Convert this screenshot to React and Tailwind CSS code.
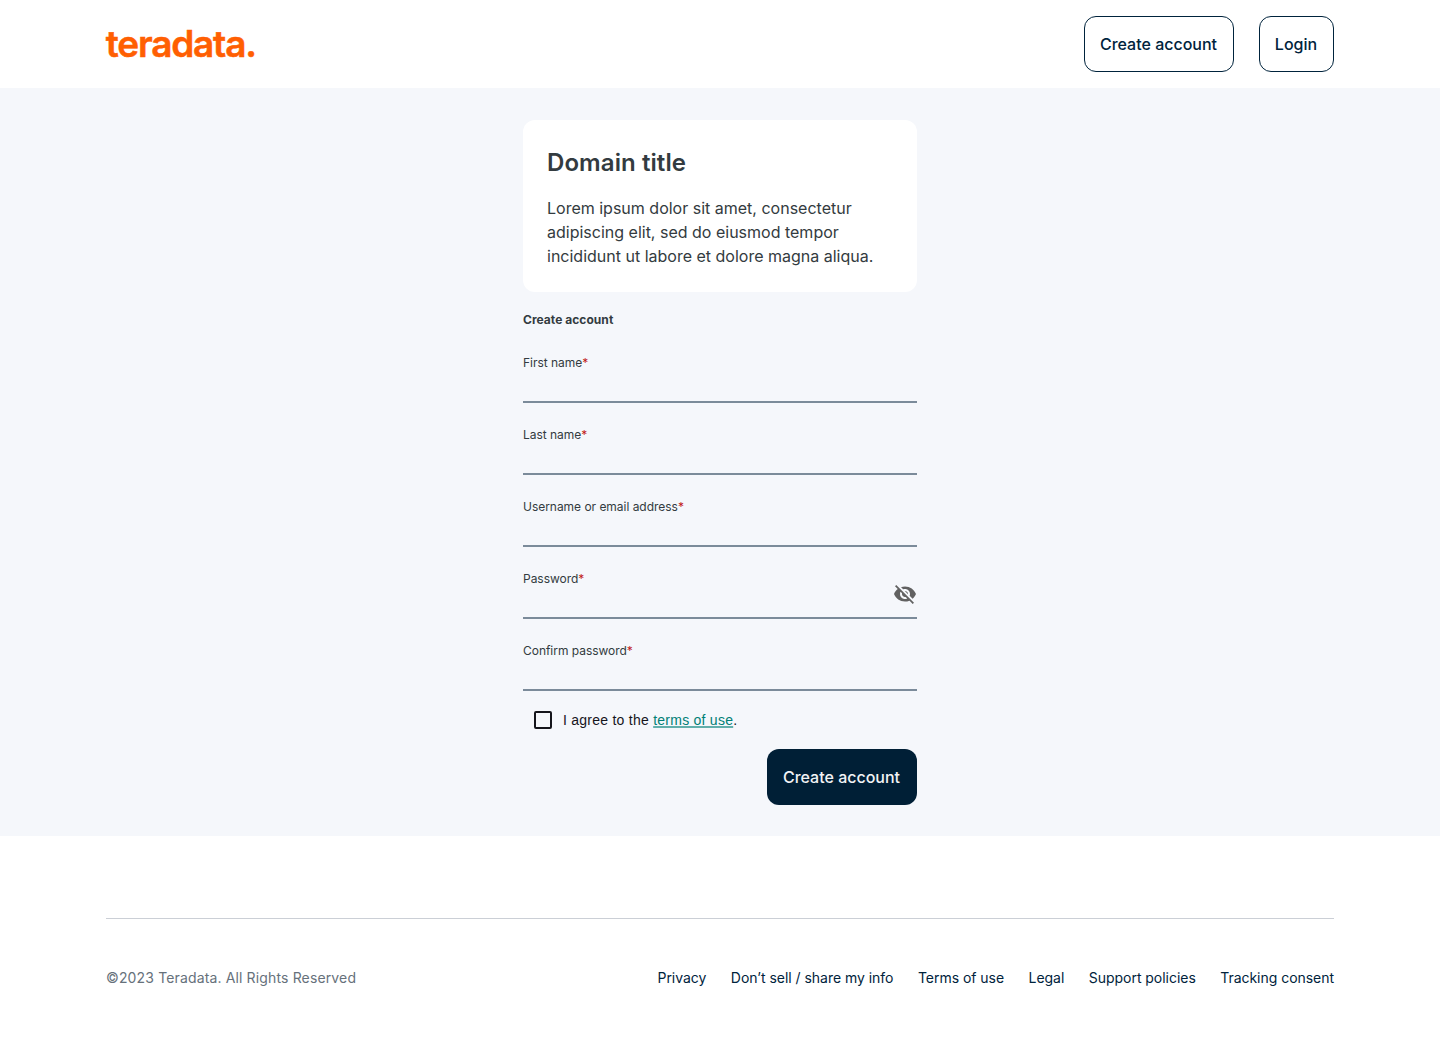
import React from "react";

const fields = [
  { label: "First name", type: "text" },
  { label: "Last name", type: "text" },
  { label: "Username or email address", type: "text" },
  { label: "Password", type: "password", toggle: true },
  { label: "Confirm password", type: "password" },
];

const links = [
  "Privacy",
  "Don’t sell / share my info",
  "Terms of use",
  "Legal",
  "Support policies",
  "Tracking consent",
];

function Logo() {
  return (
    <svg width="170" height="56" viewBox="0 0 170 56" role="img" aria-label="teradata." className="block overflow-visible">
      <text
        x="-0.2"
        y="41"
        fill="#ff5f02"
        stroke="#ff5f02"
        strokeWidth="0.5"
        className="font-['Inter',sans-serif] text-[37px] font-semibold tracking-[-1.2px]"
      >
        teradata.
      </text>
    </svg>
  );
}

function VisibilityOff() {
  return (
    <svg width="24" height="24" viewBox="0 0 24 24" fill="#616161" className="block">
      <path d="M12 7c2.76 0 5 2.24 5 5 0 .65-.13 1.26-.36 1.83l2.92 2.92c1.51-1.26 2.7-2.89 3.43-4.75-1.73-4.39-6-7.5-11-7.5-1.4 0-2.74.25-3.98.7l2.16 2.16C10.74 7.13 11.35 7 12 7zM2 4.27l2.28 2.28.46.46C3.08 8.3 1.78 10.02 1 12c1.73 4.39 6 7.5 11 7.5 1.55 0 3.03-.3 4.38-.84l.42.42L19.73 22 21 20.73 3.27 3 2 4.27zM7.53 9.8l1.55 1.55c-.05.21-.08.43-.08.65 0 1.66 1.34 3 3 3 .22 0 .44-.03.65-.08l1.55 1.55c-.67.33-1.41.53-2.2.53-2.76 0-5-2.24-5-5 0-.79.2-1.53.53-2.2zm4.31-.78l3.15 3.15.02-.16c0-1.66-1.34-3-3-3l-.17.01z" />
    </svg>
  );
}

function Field({ label, type, toggle }) {
  return (
    <label className="flex h-12 flex-col border-b-2 border-[#7b8b9a]">
      <span className="text-xs leading-4 tracking-[-0.03px]">
        {label}
        <span className="text-[#c21a1a]">*</span>
      </span>
      <span className="flex h-[30px] items-start">
        <input type={type} className="h-full min-w-0 flex-1 bg-transparent outline-none" />
        {toggle && (
          <button type="button" aria-label="Show password" className="-mt-[5.5px]">
            <VisibilityOff />
          </button>
        )}
      </span>
    </label>
  );
}

export default function App() {
  return (
    <div className="min-h-[1048px] bg-white font-['Inter',sans-serif] text-[#333b40]">
      <header className="flex h-[88px] items-center justify-between px-[106px]">
        <Logo />
        <nav className="flex gap-[25px] text-base font-medium text-[#00233c]">
          <button className="h-14 w-[150px] rounded-xl border border-[#00233c] pr-px">Create account</button>
          <button className="h-14 w-[75px] rounded-xl border border-[#00233c] pr-px">Login</button>
        </nav>
      </header>

      <main className="flex h-[748px] justify-center bg-[#f5f7fb] pt-[31.5px]">
        <div className="w-[394px]">
          <section className="h-[172px] rounded-xl bg-white px-6 pt-[27px]">
            <h1 className="text-2xl leading-8 font-semibold tracking-[0.08px]">Domain title</h1>
            <p className="mt-[17.5px] text-base leading-6">
              Lorem ipsum dolor sit amet, consectetur adipiscing elit, sed do eiusmod tempor incididunt ut labore
              et dolore magna aliqua.
            </p>
          </section>

          <form>
            <h2 className="mt-[20.5px] text-xs leading-4 font-bold tracking-[0.04px]">Create account</h2>
            <div className="mt-[27px] flex flex-col gap-6">
              {fields.map((f) => (
                <Field key={f.label} {...f} />
              ))}
            </div>
            <label className="mt-[19px] ml-[11px] flex h-[19px] items-center gap-[11px] font-['Liberation_Sans',Arial,sans-serif] text-sm tracking-[0.25px] text-[#15151b]">
              <input
                type="checkbox"
                className="size-[18px] appearance-none rounded-[2px] border-2 border-[#15151b]"
              />
              <span>
                I agree to the{" "}
                <a
                  href="#"
                  className="text-[#007f76] underline decoration-[#007f76]/60 decoration-2 underline-offset-1 [text-decoration-skip-ink:none]"
                >
                  terms of use
                </a>
                .
              </span>
            </label>
            <button
              type="button"
              className="mt-[19.5px] ml-auto block h-14 w-[150px] rounded-xl bg-[#001f36] pr-px text-base font-medium text-[#f2f3f5]"
            >
              Create account
            </button>
          </form>
        </div>
      </main>

      <footer className="mx-[106px] mt-[82px] border-t border-[#cbcfd6] pt-[49px]">
        <div className="flex items-center justify-between text-sm">
          <p className="tracking-[0.14px] text-[#66717b]">©2023 Teradata. All Rights Reserved</p>
          <ul className="flex gap-[24.5px] tracking-[-0.035px] text-[#00233c]">
            {links.map((l) => (
              <li key={l}>
                <a href="#">{l}</a>
              </li>
            ))}
          </ul>
        </div>
      </footer>
    </div>
  );
}
